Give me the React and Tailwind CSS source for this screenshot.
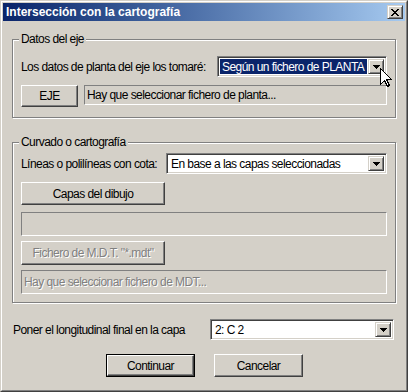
const FONT = { fontFamily: '"Liberation Sans", Arial, sans-serif' }

const raised =
  'border border-t-white border-l-white border-r-[#404040] border-b-[#404040] shadow-[inset_-1px_-1px_0_#808080]'
const sunkenThin = 'border border-t-[#808080] border-l-[#808080] border-r-white border-b-white'
const sunkenCombo =
  'border border-t-[#808080] border-l-[#808080] border-r-white border-b-white shadow-[inset_1px_1px_0_#404040,inset_-1px_-1px_0_#d4d0c8]'
const txt = 'whitespace-nowrap text-[12px] tracking-[-0.55px]'

const Arrow = () => (
  <svg width="7" height="4" viewBox="0 0 7 4" shapeRendering="crispEdges">
    <path d="M0 0h7v1h-1v1h-1v1h-1v1h-1v-1h-1v-1h-1v-1h-1z" fill="#000" />
  </svg>
)

const Combo = ({ value, selected, className }) => (
  <div className={`flex h-[21px] shrink-0 bg-white p-[2px] ${sunkenCombo} ${className}`}>
    <div
      className={`flex min-w-0 flex-1 items-center overflow-hidden pl-[2px] leading-none ${txt} ${
        selected ? 'mr-[1px] bg-[#0a246a] text-white' : 'text-black'
      }`}
    >
      {value}
    </div>
    <div className="flex w-[16px] items-center justify-center border border-t-[#d4d0c8] border-l-[#d4d0c8] border-r-[#404040] border-b-[#404040] bg-[#d4d0c8] shadow-[inset_1px_1px_0_#fff,inset_-1px_-1px_0_#808080]">
      <Arrow />
    </div>
  </div>
)

const Button = ({ children, className, disabled }) => (
  <div
    className={`flex shrink-0 items-center justify-center bg-[#d4d0c8] ${txt} ${raised} ${
      disabled ? 'text-[#808080] [text-shadow:1px_1px_0_#fff]' : 'text-black'
    } ${className}`}
  >
    {children}
  </div>
)

const Field = ({ children, className, disabled }) => (
  <div
    className={`flex items-center overflow-hidden pl-[2px] ${txt} ${sunkenThin} ${
      disabled ? 'text-[#808080] [text-shadow:1px_1px_0_#fff]' : 'text-black'
    } ${className}`}
  >
    {children}
  </div>
)

const Group = ({ label, className, children }) => (
  <div
    className={`relative border border-[#808080] shadow-[inset_1px_1px_0_#fff,1px_1px_0_#fff] px-[8px] ${className}`}
  >
    <span className={`absolute left-[6px] top-[-8px] bg-[#d4d0c8] px-[2px] leading-[14px] ${txt}`}>
      {label}
    </span>
    {children}
  </div>
)

const CloseGlyph = () => (
  <svg width="8" height="7" viewBox="0 0 8 7" shapeRendering="crispEdges">
    <path
      d="M0 0h2v1h1v1h2v-1h1v-1h2v1h-1v1h-1v1h-1v1h1v1h1v1h1v1h-2v-1h-1v-1h-2v1h-1v1h-2v-1h1v-1h1v-1h1v-1h-1v-1h-1v-1h-1z"
      fill="#000"
    />
  </svg>
)

const Cursor = () => (
  <svg
    className="absolute left-[380px] top-[68px]"
    width="13"
    height="20"
    viewBox="0 0 13 20"
    shapeRendering="crispEdges"
  >
    <path
      d="M0.5 0.5V16.5L4.5 12.5L7.5 18.5L9.5 17.5L6.5 11.5H11.5Z"
      fill="#fff"
      stroke="#000"
      strokeWidth="1"
    />
  </svg>
)

export default function App() {
  return (
    <div style={FONT} className="relative h-[392px] w-[408px] overflow-hidden bg-[#d4d0c8] text-black">
      <div className="flex h-full flex-col border border-t-[#d4d0c8] border-l-[#d4d0c8] border-r-[#404040] border-b-[#404040]">
        <div className="flex h-full flex-col border border-t-white border-l-white border-r-[#808080] border-b-[#808080] p-[1px]">
          {/* title bar */}
          <div className="flex h-[18px] shrink-0 items-center justify-between bg-gradient-to-r from-[#0a246a] to-[#a6caf0] pl-[3px] pr-[2px]">
            <span className="whitespace-nowrap text-[12px] font-bold leading-none text-white">
              Intersección con la cartografía
            </span>
            <div className="flex h-[14px] w-[16px] items-center justify-center bg-[#d4d0c8] border border-t-[#d4d0c8] border-l-[#d4d0c8] border-r-[#404040] border-b-[#404040] shadow-[inset_1px_1px_0_#fff,inset_-1px_-1px_0_#808080]">
              <CloseGlyph />
            </div>
          </div>

          {/* body */}
          <div className="flex flex-1 flex-col pl-[9px] pr-[9px] pt-[18px]">
            <Group label="Datos del eje" className="pt-[16px] pb-[10px]">
              <div className="flex items-center justify-between">
                <span className={txt}>Los datos de planta del eje los tomaré:</span>
                <Combo value="Según un fichero de PLANTA" selected className="w-[170px]" />
              </div>
              <div className="mt-[8px] flex gap-[6px]">
                <Button className="h-[22px] w-[57px]">EJE</Button>
                <Field className="h-[20px] flex-1">Hay que seleccionar fichero de planta...</Field>
              </div>
            </Group>

            <Group label="Curvado o cartografía" className="mt-[24px] pt-[10px] pb-[8px]">
              <div className="flex items-center justify-between">
                <span className={txt}>Líneas o polilíneas con cota:</span>
                <Combo value="En base a las capas seleccionadas" className="w-[221px]" />
              </div>
              <Button className="mt-[8px] h-[23px] w-[144px]">Capas del dibujo</Button>
              <Field className="mt-[7px] h-[24px]" />
              <Button disabled className="mt-[5px] h-[24px] w-[144px]">
                Fichero de M.D.T. "*.mdt"
              </Button>
              <Field disabled className="mt-[5px] h-[24px]">
                Hay que seleccionar fichero de MDT...
              </Field>
            </Group>

            <div className="mt-[16px] flex items-center justify-between pl-[1px] pr-[2px]">
              <span className={txt}>Poner el longitudinal final en la capa</span>
              <Combo value="2: C 2" className="w-[184px]" />
            </div>

            <div className="mt-[14px] flex justify-center gap-[19px] pl-[1px]">
              <div className="h-[23px] w-[89px] border border-black">
                <Button className="h-full w-full">Continuar</Button>
              </div>
              <Button className="h-[23px] w-[89px]">Cancelar</Button>
            </div>
          </div>
        </div>
      </div>
      <Cursor />
    </div>
  )
}
